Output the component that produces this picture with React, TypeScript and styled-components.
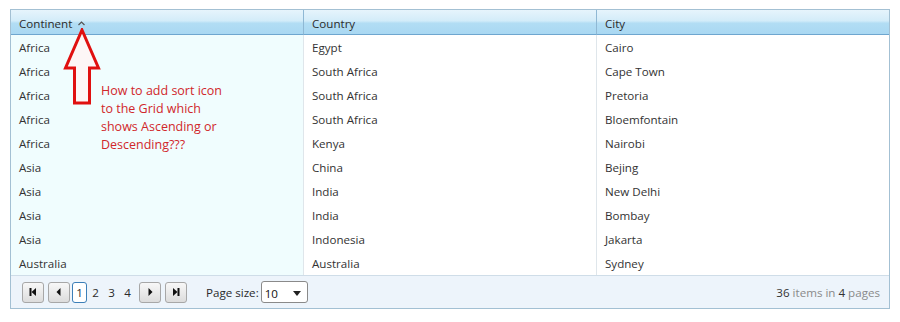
import styled, { createGlobalStyle } from "styled-components";

const GlobalStyle = createGlobalStyle`
  body {
    margin: 0;
    background: #fff;
    font-family: "Open Sans", "Liberation Sans", sans-serif;
  }
`;

const rows = [
  ["Africa", "Egypt", "Cairo"],
  ["Africa", "South Africa", "Cape Town"],
  ["Africa", "South Africa", "Pretoria"],
  ["Africa", "South Africa", "Bloemfontain"],
  ["Africa", "Kenya", "Nairobi"],
  ["Asia", "China", "Bejing"],
  ["Asia", "India", "New Delhi"],
  ["Asia", "India", "Bombay"],
  ["Asia", "Indonesia", "Jakarta"],
  ["Australia", "Australia", "Sydney"],
];

const Page = styled.div`
  padding: 9px 0 0 10px;
`;

const Grid = styled.div`
  position: relative;
  width: 878px;
  border: 1px solid #a3c0d3;
  font-size: 11.6px;
  color: #333;
`;

const Row = styled.div`
  display: grid;
  grid-template-columns: 292px 293px 293px;
`;

const HeadCell = styled.div<{ $first?: boolean }>`
  height: 25px;
  box-sizing: border-box;
  padding: 2px 0 0 8px;
  display: flex;
  align-items: center;
  gap: 6px;
  border-left: ${(p) => (p.$first ? "none" : "1px solid #8fb8d4")};
  border-bottom: 1px solid #6ea6cf;
  background: linear-gradient(#e6f4fc 0%, #d3ecf9 45%, #b2ddf4 55%, #a9d8f2 100%);
  color: #2b2b2b;
`;

const Cell = styled.div<{ $sorted?: boolean; $first?: boolean }>`
  height: 23px;
  padding: 1px 0 0 8px;
  line-height: 23px;
  background: ${(p) => (p.$sorted ? "#f0fdfe" : "#fff")};
  border-left: ${(p) => (p.$first ? "none" : "1px solid #dfe6eb")};
`;

const Footer = styled.div`
  height: 32px;
  display: flex;
  align-items: center;
  padding: 0 9px 0 11px;
  background: #edf4fb;
  border-top: 1px solid #cfdde8;
`;

const NavButton = styled.button`
  width: 22px;
  height: 21px;
  padding: 0;
  margin-right: 4px;
  display: flex;
  align-items: center;
  justify-content: center;
  border: 1px solid #a7a7a7;
  border-radius: 3px;
  background: linear-gradient(#f8f8f8, #dcdcdc);
`;

const Pages = styled.div`
  display: flex;
  margin: 0 3px 0 -2px;
`;

const PageNum = styled.span<{ $active?: boolean }>`
  width: 15px;
  height: 21px;
  margin-right: 1px;
  display: flex;
  align-items: center;
  justify-content: center;
  box-sizing: border-box;
  border: 1px solid ${(p) => (p.$active ? "#3c7fb8" : "transparent")};
  border-radius: 3px;
  color: #2b2b2b;
  background: ${(p) => (p.$active ? "#fff" : "transparent")};
`;

const SizeLabel = styled.span`
  margin-left: 15px;
  color: #2b2b2b;
`;

const Select = styled.div`
  width: 47px;
  height: 22px;
  margin-left: 2px;
  display: flex;
  align-items: center;
  justify-content: space-between;
  padding: 2px 6px 0 3px;
  box-sizing: border-box;
  border: 1px solid #8a8a8a;
  border-radius: 3px;
  background: #fff;
  color: #111;
`;

const Info = styled.span`
  margin-left: auto;
  color: #8a8a8a;
  b {
    font-weight: normal;
    color: #333;
  }
`;

const Note = styled.div`
  position: absolute;
  left: 90px;
  top: 72px;
  width: 128px;
  font-size: 12.5px;
  line-height: 18px;
  color: #d0272b;
`;

const Arrow = styled.svg`
  position: absolute;
  left: 51px;
  top: 18px;
`;

const Tri = ({ dir }: { dir: "first" | "prev" | "next" | "last" }) => (
  <svg width="10" height="10" viewBox="0 0 10 10">
    {dir === "first" && (
      <>
        <rect x="1.5" y="1" width="2" height="8" fill="#111" />
        <path d="M8 1 L3.5 5 L8 9 Z" fill="#111" />
      </>
    )}
    {dir === "prev" && <path d="M6.5 1 L2.5 5 L6.5 9 Z" fill="#111" />}
    {dir === "next" && <path d="M3.5 1 L7.5 5 L3.5 9 Z" fill="#111" />}
    {dir === "last" && (
      <>
        <path d="M2 1 L6.5 5 L2 9 Z" fill="#111" />
        <rect x="6.5" y="1" width="2" height="8" fill="#111" />
      </>
    )}
  </svg>
);

export default function App() {
  return (
    <>
      <GlobalStyle />
      <Page>
        <Grid>
          <Row>
            <HeadCell $first>
              Continent
              <svg width="7" height="5" viewBox="0 0 7 5">
                <path d="M0.5 4 L3.5 1 L6.5 4" fill="none" stroke="#555" strokeWidth="1.2" />
              </svg>
            </HeadCell>
            <HeadCell>Country</HeadCell>
            <HeadCell>City</HeadCell>
          </Row>
          {rows.map((r, i) => (
            <Row key={i}>
              <Cell $sorted $first>
                {r[0]}
              </Cell>
              <Cell>{r[1]}</Cell>
              <Cell>{r[2]}</Cell>
            </Row>
          ))}
          <Footer>
            <NavButton>
              <Tri dir="first" />
            </NavButton>
            <NavButton>
              <Tri dir="prev" />
            </NavButton>
            <Pages>
              <PageNum $active>1</PageNum>
              <PageNum>2</PageNum>
              <PageNum>3</PageNum>
              <PageNum>4</PageNum>
            </Pages>
            <NavButton>
              <Tri dir="next" />
            </NavButton>
            <NavButton>
              <Tri dir="last" />
            </NavButton>
            <SizeLabel>Page size:</SizeLabel>
            <Select>
              <span>10</span>
              <svg width="8" height="5" viewBox="0 0 8 5">
                <path d="M0 0 L8 0 L4 5 Z" fill="#222" />
              </svg>
            </Select>
            <Info>
              <b>36</b> items in <b>4</b> pages
            </Info>
          </Footer>
          <Arrow width="40" height="80" viewBox="0 0 40 80">
            <path
              d="M20 2 L36.5 40 L27.5 40 L27.5 75 L12.5 75 L12.5 40 L3.5 40 Z"
              fill="#fdf6f6"
              stroke="#e01010"
              strokeWidth="3"
              strokeLinejoin="miter"
            />
          </Arrow>
          <Note>
            How to add sort icon to the Grid which shows Ascending or Descending???
          </Note>
        </Grid>
      </Page>
    </>
  );
}
